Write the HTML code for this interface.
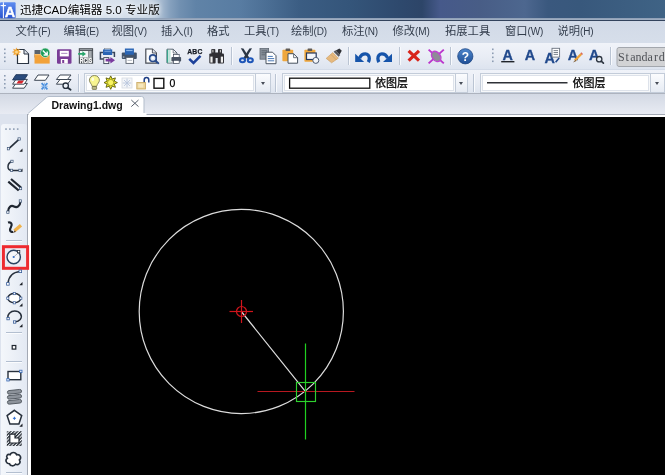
<!DOCTYPE html>
<html lang="zh">
<head>
<meta charset="utf-8">
<title>迅捷CAD编辑器 5.0 专业版</title>
<style>
*{box-sizing:border-box;margin:0;padding:0}
html,body{width:665px;height:475px;overflow:hidden;background:#d3dbe8}
body{position:relative;font-family:"Liberation Sans","Noto Sans CJK SC",sans-serif;color:#1e2a3c}
.abs{position:absolute}
svg.abs,.mi,.ddt,#titletxt,.tabt{filter:blur(.35px)}
#title{left:0;top:0;width:665px;height:18px;
 background:linear-gradient(90deg,#dfe7f0 0px,#d8e1ec 120px,#c6d3e2 150px,#a6bad0 161px,#86a1be 170px,#7190b1 180px,#6083a7 196px,#587ca2 240px,#4a6d93 270px,#3b5d83 300px,#34557a 350px,#2e496d 400px,#2d4568 422px,#46598a 440px,#485d86 480px,#4d678f 525px,#3a587e 548px,#38587c 580px,#3f6385 665px)}
#titletxt{left:20px;top:2px;font-size:11.6px;line-height:16px;color:#000;white-space:nowrap;letter-spacing:0px;text-shadow:0 0 4px #fff,0 0 6px #fff}
#tl1{left:0;top:18px;width:665px;height:2px;background:linear-gradient(#8b9cb4,#a3b1c4)}
#tl2{left:0;top:20px;width:665px;height:1px;background:#34445d}
#menu{left:0;top:21px;width:665px;height:22px;background:linear-gradient(#d2dae7,#d6deea)}
.mi{position:absolute;top:23.4px;font-size:11.3px;line-height:16px;color:#333d4c;white-space:nowrap}
.mi small{font-size:10px;letter-spacing:-0.15px;position:relative;top:0px}
#tb1{left:0;top:43px;width:665px;height:26px;background:linear-gradient(#f0f3f9 0,#e9edf5 50%,#dde4ef 100%)}
#tb2{left:0;top:70px;width:665px;height:24px;background:linear-gradient(#f0f3f9 0,#e9edf5 50%,#dde4ef 100%)}
#tabrow{left:0;top:93px;width:665px;height:21px;background:linear-gradient(#d3d9e4,#e8ebf3);border-top:1px solid #adb3be}
#leftbar{left:0;top:114px;width:31px;height:361px;background:#dde3ee}
#leftin{left:1px;top:124px;width:26px;height:352px;background:linear-gradient(90deg,#f4f7fb,#e3e9f3);border-radius:3px 3px 0 0}
#canvas{left:28px;top:115px;width:640px;height:364px;background:#000;border:solid #fff;border-width:2px 0 0 3px;outline:1px solid #a3a9b4;outline-offset:0}
.ic{position:absolute;width:16px;height:16px}
.sep{position:absolute;width:1px;height:18px;background:#9fb0c6;box-shadow:1px 0 0 #fff}
.grip{position:absolute;width:2px;height:16px;background:repeating-linear-gradient(#8c9bb0 0 2px,transparent 2px 4px)}
.dd{position:absolute;top:73px;height:20px;background:#fff;border:1px solid #c3ccd9;box-shadow:inset 0 0 0 1px #f6f8fa,inset 0 0 0 2px #dde2ea}
.ddb{position:absolute;top:73px;height:20px;background:linear-gradient(#fbfcfe,#e6ebf3);border:1px solid #c3ccd9}
.ddb:after{content:"";position:absolute;left:50%;top:7.500px;margin-left:-2.500px;border:2.500px solid transparent;border-top:3px solid #474d58}
.ddt{position:absolute;font-size:12px;line-height:16px;color:#000;white-space:nowrap;-webkit-text-stroke:.25px #000}
</style>
</head>
<body>
<div id="title" class="abs"></div>
<div id="tl1" class="abs"></div><div id="tl2" class="abs"></div>
<svg class="abs" style="left:0;top:1px" width="17" height="18" viewBox="0 0 17 18">
 <defs><linearGradient id="lg" x1="0" y1="0" x2="0" y2="1"><stop offset="0" stop-color="#5f8df0"/><stop offset="1" stop-color="#2a55cf"/></linearGradient></defs>
 <rect x="0" y="1.300" width="15.600" height="15.900" rx="1" fill="url(#lg)"/>
 <path d="M3.400 1.300v15.900M0.600 4.600h5.400" stroke="#fff" stroke-width="1" fill="none"/>
 <path d="M3.400 2.600l.7 1.400l1.400.6l-1.400.6l-.7 1.400l-.7-1.400l-1.400-.6l1.400-.6z" fill="#fff"/>
 <text x="9.900" y="16.200" font-family="'Liberation Sans',sans-serif" font-size="14.500" font-weight="bold" fill="#fff" text-anchor="middle" stroke="#fff" stroke-width=".3">A</text>
</svg>
<div id="titletxt" class="abs">迅捷CAD编辑器 5.0 专业版</div>

<div id="menu" class="abs"></div>
<div class="mi" style="left:15.500px">文件<small>(F)</small></div>
<div class="mi" style="left:63.500px">编辑<small>(E)</small></div>
<div class="mi" style="left:111.500px">视图<small>(V)</small></div>
<div class="mi" style="left:161px">插入<small>(I)</small></div>
<div class="mi" style="left:207px">格式</div>
<div class="mi" style="left:244px">工具<small>(T)</small></div>
<div class="mi" style="left:291px">绘制<small>(D)</small></div>
<div class="mi" style="left:342px">标注<small>(N)</small></div>
<div class="mi" style="left:392.500px">修改<small>(M)</small></div>
<div class="mi" style="left:445px">拓展工具</div>
<div class="mi" style="left:505px">窗口<small>(W)</small></div>
<div class="mi" style="left:557.500px">说明<small>(H)</small></div>

<div id="tb1" class="abs"></div>
<div id="tb2" class="abs"></div>
<div id="tabrow" class="abs"></div>
<div id="leftbar" class="abs"></div>
<div id="leftin" class="abs"></div>
<div id="canvas" class="abs"></div>


<!-- toolbar icons -->
<svg class="abs" style="left:0;top:0" width="665" height="120" viewBox="0 0 665 120" font-family="'Liberation Sans','Noto Sans CJK SC',sans-serif">
 <defs>
  <linearGradient id="hb" x1="0" y1="0" x2="0" y2="1"><stop offset="0" stop-color="#4d86cc"/><stop offset="1" stop-color="#1f4f96"/></linearGradient>
 </defs>
 <!-- grips -->
 <g fill="#8e9db3">
  <rect x="4" y="48.5" width="1.6" height="1.6"/><rect x="4" y="52.5" width="1.6" height="1.6"/><rect x="4" y="56.5" width="1.6" height="1.6"/><rect x="4" y="60.5" width="1.6" height="1.6"/>
  <rect x="4" y="75" width="1.6" height="1.6"/><rect x="4" y="79" width="1.6" height="1.6"/><rect x="4" y="83" width="1.6" height="1.6"/><rect x="4" y="87" width="1.6" height="1.6"/>
  <rect x="492" y="48.5" width="1.6" height="1.6"/><rect x="492" y="52.5" width="1.6" height="1.6"/><rect x="492" y="56.5" width="1.6" height="1.6"/><rect x="492" y="60.5" width="1.6" height="1.6"/>
 </g>
 <!-- separators -->
 <g stroke="#bac4d3" stroke-width="1">
  <path d="M231.5 47v18M348.5 47v18M399.5 47v18M450.5 47v18M610.5 47v18M78.5 74v18M275.5 74v18M473.5 74v18"/>
 </g>
 <g stroke="#f8fafd" stroke-width="1">
  <path d="M232.5 47v18M349.5 47v18M400.5 47v18M451.5 47v18M611.5 47v18M79.5 74v18M276.5 74v18M474.5 74v18"/>
 </g>

 <!-- 1 new -->
 <path d="M17.5 49.5h6.5l4.5 4.5v9.5h-11z" fill="#fff" stroke="#2b3543" stroke-width="1.2"/>
 <path d="M24 49.5v4.5h4.5" fill="#dfe5ee" stroke="#2b3543" stroke-width="1"/>
 <path d="M16.300 47.400L17.218 49.783L19.553 48.747L18.517 51.082L20.900 52.000L18.517 52.918L19.553 55.253L17.218 54.217L16.300 56.600L15.382 54.217L13.047 55.253L14.083 52.918L11.700 52.000L14.083 51.082L13.047 48.747L15.382 49.783z" fill="#f4a528" stroke="#e8952a" stroke-width=".4" transform="translate(1.800 5.200) scale(.9)"/><circle cx="16.500" cy="52" r="1.500" fill="#fbd58a"/>
 <!-- 2 open -->
 <path d="M34.5 50h6l1 1.5h3v6h-10z" fill="#5a626c"/>
 <path d="M34.5 54h15.2v9.6h-15.2z" fill="#f2a23a"/>
 <path d="M34.5 54h15.2v1.2h-15.2z" fill="#f7bd6a"/>
 <circle cx="45.2" cy="52.8" r="4.7" fill="#1e9d58" stroke="#e9f3ec" stroke-width=".6"/>
 <path d="M42.8 50.6l3.6 3.6M47.2 51.4v3.6h-3.6" fill="none" stroke="#fff" stroke-width="1.4"/>
 <!-- 3 save -->
 <rect x="57" y="49.2" width="14.5" height="14.5" rx="1.2" fill="#7a3d97"/>
 <rect x="59.8" y="50.8" width="9" height="5.6" fill="#fff"/>
 <rect x="61.2" y="52.8" width="6.2" height="1.2" fill="#b79ac8"/>
 <rect x="60.8" y="59" width="7" height="4.7" fill="#fff"/>
 <rect x="62.2" y="60" width="2" height="3" fill="#7a3d97"/>
 <!-- 4 rcis -->
 <rect x="78.800" y="48.200" width="14.300" height="15.500" fill="#474c52"/>
 <rect x="79.800" y="49" width="12.300" height="1.200" fill="#8f959b"/>
 <rect x="79.800" y="51" width="12.300" height="6.600" fill="#f4f5f7"/>
 <path d="M88.900 51v6.600M91.100 51v6.600" stroke="#6a7077" stroke-width="1.300"/>
 <path d="M78.200 53h4.200v-1.700l3.600 2.600l-3.600 2.600v-1.700h-4.200z" fill="#27a56a"/>
 <text transform="translate(86 63.100) scale(.78 1)" font-size="6.600" font-weight="bold" fill="#fff" stroke="#fff" stroke-width=".3" text-anchor="middle">RCIS</text>
 <!-- 5 print arrow -->
 <rect x="104.600" y="48.300" width="6" height="2" fill="#fff" stroke="#7d8591" stroke-width=".6"/>
 <rect x="103" y="49.400" width="9.200" height="5.600" fill="#2a64b4"/>
 <rect x="104.400" y="50.800" width="6.400" height="1.100" fill="#6d9ad6"/>
 <path d="M103 52.600h-2.600v6.300h3.500M112.200 52.600h2.200v4.400" fill="none" stroke="#37445a" stroke-width="1.500"/>
 <rect x="103.800" y="57.600" width="5" height="6" fill="#fff" stroke="#3a4556" stroke-width=".9"/>
 <path d="M105.600 58.800h4.800v-1.900l4.600 3.300l-4.600 3.300v-1.900h-4.800z" fill="#7a3a9e"/>
 <!-- 6 print -->
 <rect x="121.800" y="52.400" width="15" height="6.600" rx="1" fill="#41526a"/>
 <rect x="124.900" y="48.500" width="9" height="6.200" fill="#2a64b4"/>
 <rect x="126.200" y="49.900" width="6.400" height="1.200" fill="#8db6e6"/>
 <rect x="126" y="57.400" width="7.600" height="6" fill="#fff" stroke="#59616d" stroke-width=".9"/>
 <path d="M127.500 60.400h4.600" stroke="#a3abb6" stroke-width=".8"/>
 <rect x="122.800" y="56.600" width="1.600" height=".9" fill="#dfe5ee"/>
 <!-- 7 preview -->
 <path d="M145.800 49h6.600l4 4v10.200h-10.600z" fill="#fbfcfd" stroke="#474c55" stroke-width="1.200"/>
 <path d="M152.400 49v4h4" fill="#e3e7ee" stroke="#474c55" stroke-width=".9"/>
 <circle cx="152.900" cy="58.200" r="3.300" fill="#dfe9f6" stroke="#27498a" stroke-width="1.600"/>
 <circle cx="152.900" cy="58.200" r="1.100" fill="#fff"/>
 <path d="M155.500 60.800l2.800 2.400" stroke="#27498a" stroke-width="2" stroke-linecap="round"/>
 <!-- 8 page+printer -->
 <path d="M167 49.200h6.200l3.800 3.800v10h-10z" fill="#fff" stroke="#596471" stroke-width="1"/>
 <path d="M167.500 49.700v13" stroke="#39a58c" stroke-width="1.400"/><rect x="168.200" y="49.800" width="2.400" height="12.800" fill="#bfe3da"/>
 <path d="M173.200 49.200v3.800h3.800" fill="none" stroke="#596471" stroke-width=".8"/>
 <rect x="173.400" y="54.500" width="5.800" height="3" fill="#fff" stroke="#3a4454" stroke-width=".7"/>
 <rect x="171.400" y="57" width="9.700" height="4.600" rx=".8" fill="#485362"/>
 <rect x="173.400" y="60.300" width="5.800" height="3.300" fill="#fff" stroke="#3a4454" stroke-width=".7"/>
 <!-- 9 abc -->
 <text x="194.900" y="53.700" font-size="6.800" font-weight="bold" fill="#161b24" stroke="#161b24" stroke-width=".25" text-anchor="middle" letter-spacing=".2">ABC</text>
 <path d="M189.200 58.800l4.300 4.100l7-7" fill="none" stroke="#1c419a" stroke-width="2.500"/>
 <!-- 10 binoculars -->
 <g fill="#303035">
  <rect x="211.300" y="49" width="4" height="5.500" rx=".8"/><rect x="218" y="49" width="4" height="5.500" rx=".8"/>
  <rect x="209.300" y="53.600" width="6.300" height="10" rx="1"/><rect x="217.700" y="53.600" width="6.300" height="10" rx="1"/>
  <rect x="215" y="52.500" width="3.300" height="5.500"/>
 </g>
 <rect x="210.400" y="56.600" width="2.200" height="6" fill="#f0f0f0"/><rect x="220.800" y="56.600" width="2.200" height="6" fill="#f0f0f0"/><rect x="212.300" y="49.800" width="1.200" height="2.600" fill="#bdbdbd"/><rect x="219.800" y="49.800" width="1.200" height="2.600" fill="#bdbdbd"/>
 <!-- 11 scissors -->
 <path d="M240.800 48.300l2.600 0.200l6 9.300l-2.300 1.300z" fill="#2b3645"/>
 <path d="M252 48.300l-2.600 0.200l-6 9.300l2.300 1.300z" fill="#2b3645"/>
 <ellipse cx="242.500" cy="60.200" rx="2.500" ry="2" fill="#dfe6f2" stroke="#1d55b8" stroke-width="2.100"/>
 <ellipse cx="250.300" cy="60.200" rx="2.500" ry="2" fill="#dfe6f2" stroke="#1d55b8" stroke-width="2.100"/>
 <!-- 12 copy -->
 <rect x="260" y="48.600" width="8.600" height="10.600" fill="#8a929c" stroke="#5f6872" stroke-width=".8"/>
 <path d="M261.500 50.800h5.500M261.500 52.800h5.500M261.500 54.800h3.500" stroke="#5b636d" stroke-width=".9"/>
 <path d="M266 52.200h6.500l3.500 3.500v8h-10z" fill="#fff" stroke="#48525f" stroke-width="1"/>
 <path d="M267.800 56.400h5M267.800 58.600h6.400M267.800 60.800h6.400" stroke="#4a78b5" stroke-width="1"/>
 <!-- 13 paste -->
 <rect x="282.400" y="49.800" width="10.800" height="11.500" rx=".8" fill="#efa73d"/>
 <rect x="285.600" y="48.400" width="4.600" height="2.600" rx=".6" fill="#5f5a55"/>
 <path d="M288 53.700h5.600l4 4v5.500h-9.600z" fill="#fff" stroke="#46505d" stroke-width="1"/>
 <path d="M293.600 53.700v4h4" fill="none" stroke="#46505d" stroke-width=".8"/>
 <!-- 14 paste special -->
 <rect x="304.400" y="49.800" width="11" height="12" rx=".8" fill="#efa73d"/>
 <rect x="307.600" y="48.400" width="4.600" height="2.600" rx=".6" fill="#5f5a55"/>
 <rect x="306.500" y="53" width="9.700" height="6.500" fill="#f4f6fa" stroke="#25385c" stroke-width="1.200"/>
 <circle cx="315.800" cy="60.400" r="3" fill="#f4f6fa" stroke="#4a5870" stroke-width="1"/>
 <!-- 15 brush -->
 <path d="M332.800 52.600l5.600 5.600l-6.800 4.600l-5.400-4.400z" fill="#e6b97e" stroke="#c99b5c" stroke-width=".6"/>
 <path d="M331 54.500l5.500 5.500" stroke="#c9a06a" stroke-width=".8"/>
 <path d="M333.600 51.800l1.800-1.600l4.800 4.800l-1.600 1.800z" fill="#56585d"/>
 <path d="M335.800 50.600l3.600-2.200l2.400 2.400l-2.200 3.600z" fill="#2f3136"/>
 <!-- 16 undo -->
 <path d="M355.200 53.800v8.300h9z" fill="#1654aa"/>
 <path d="M359.600 58.200c2.200-5.600 9.900-5.900 9.700 0.300c0 1.400-0.400 2.500-1 3.600" fill="none" stroke="#1654aa" stroke-width="3.300"/>
 <!-- 17 redo -->
 <path d="M392 53.800v8.300h-9z" fill="#1654aa"/>
 <path d="M387.600 58.200c-2.200-5.600-9.900-5.900-9.700 0.300c0 1.400 0.400 2.500 1 3.600" fill="none" stroke="#1654aa" stroke-width="3.300"/>
 <!-- 18 red x -->
 <path d="M408.600 50.800l10.400 9.800M419 50.800l-10.400 9.800" stroke="#d8241b" stroke-width="3.200"/>
 <!-- 19 purple x -->
 <path d="M428.600 49.600l15.200 13.800M443.800 49.600l-15.200 13.800" stroke="#bb33cc" stroke-width="1.900"/>
 <ellipse cx="436.200" cy="56.400" rx="5.600" ry="4" transform="rotate(52 436.200 56.400)" fill="#8f8b97" stroke="#c044d2" stroke-width="1.500"/>
 <!-- 20 help -->
 <circle cx="465.300" cy="56.300" r="7.600" fill="url(#hb)" stroke="#1c4583" stroke-width=".8"/>
 <text x="465.300" y="60.600" font-size="12" font-weight="bold" fill="#fff" text-anchor="middle">?</text>
 <!-- 21-25 text A icons -->
 <g font-weight="bold" fill="#21498c" stroke="#21498c" stroke-width=".3" font-size="14.400" text-anchor="middle">
  <text x="507.800" y="59.700">A</text>
  <text x="530" y="59.900">A</text>
  <text x="549.800" y="63.200">A</text>
  <text x="573" y="60.200">A</text>
  <text x="594.200" y="60.200">A</text>
 </g>
 <path d="M501.200 61.700h13.200" stroke="#20242a" stroke-width="1.400"/>
 <!-- 23 doc -->
 <rect x="552" y="48.300" width="7.600" height="8.800" fill="#fdfdfe" stroke="#6a727d" stroke-width=".9"/>
 <path d="M553.600 50.600h4.400M553.600 52.500h4.400M553.600 54.400h4.400" stroke="#59636f" stroke-width=".8"/>
 <path d="M555.600 62.200l3.600-4.200" stroke="#21498c" stroke-width="1.600"/>
 <!-- 24 pencil -->
 <path d="M581.300 54l-6.400 6.400" stroke="#f0a236" stroke-width="2.300"/>
 <path d="M575.400 59.700l-2.400 2.800l3.300-1.600z" fill="#7a5a34"/>
 <path d="M582.200 53.100l-1 1" stroke="#d86a5a" stroke-width="2.300"/>
 <!-- 25 magnifier -->
 <circle cx="599.200" cy="59.200" r="2.700" fill="#e8eef6" stroke="#2c3440" stroke-width="1.300"/>
 <path d="M601.200 61.200l2.200 2" stroke="#2c3440" stroke-width="1.700" stroke-linecap="round"/>
 <!-- standard box -->
 <rect x="617" y="47.500" width="52" height="19" rx="2" fill="#d2d3d5" stroke="#a3a7ad" stroke-width="1"/>
 <text x="621.3 627.1 632.9 638.6 644.4 650.2 656.0 661.8" y="61" font-family="'Liberation Serif',serif" font-size="12" fill="#505358" text-anchor="middle">Standard</text>
</svg>


<!-- row2 dropdowns -->
<div class="dd" style="left:84px;width:172px"></div><div class="ddb" style="left:255px;width:16px"></div>
<div class="dd" style="left:282px;width:174px"></div><div class="ddb" style="left:455px;width:13px"></div>
<div class="dd" style="left:480px;width:171px"></div><div class="ddb" style="left:650px;width:15px"></div>
<div class="ddt" style="left:169.5px;top:75px;font-size:10.5px">0</div>
<div class="ddt" style="left:375px;top:74.5px;font-size:11px">依图层</div>
<div class="ddt" style="left:572.5px;top:74.5px;font-size:11px">依图层</div>
<svg class="abs" style="left:0;top:70px" width="665" height="26" viewBox="0 70 665 26">
 <!-- layers a -->
 <path d="M12.600 88.200l3.200-4.800h11.600l-3.200 4.800z" fill="#fff" stroke="#3d4754" stroke-width="1"/>
 <path d="M12.600 84.200l3.200-4.800h11.600l-3.200 4.800z" fill="#fff" stroke="#3d4754" stroke-width="1"/>
 <path d="M16.500 83.600l2-3h5.500l-2 3z" fill="#d8262c"/>
 <path d="M12.600 79.900l3.300-5.200h11.600l-3.300 5.200z" fill="#2b4b7c" stroke="#243b5e" stroke-width="1"/>
 <!-- b -->
 <path d="M34.400 80.300l3.600-5.300h11l-3.600 5.300z" fill="#fff" stroke="#3d4754" stroke-width="1"/>
 <path d="M41.600 83.200l5.800 6.200M47.400 83.200l-5.800 6.200" stroke="#4a8fde" stroke-width="1.700"/><path d="M44.500 82.800v7M41.300 86.300h6.400" stroke="#8db8ea" stroke-width="1"/>
 <!-- c -->
 <path d="M56.400 84.200l3.600-4.700h11l-3.600 4.700z" fill="#fff" stroke="#3d4754" stroke-width="1"/>
 <path d="M56.400 79.500l3.600-4.500h11l-3.600 4.500z" fill="#fff" stroke="#3d4754" stroke-width="1"/>
 <circle cx="65.700" cy="85.700" r="2.700" fill="#eef2f7" stroke="#27313d" stroke-width="1.300"/>
 <path d="M67.800 87.800l2.800 2" stroke="#27313d" stroke-width="1.800" stroke-linecap="round"/>
 <!-- bulb -->
 <path d="M94.400 75.500c-3 0-5 2.200-5 4.700c0 2.400 2.200 3.600 2.800 6.200h4.400c0.600-2.600 2.800-3.800 2.800-6.200c0-2.500-2-4.700-5-4.700z" fill="#f7f590" stroke="#7d7d55" stroke-width=".9"/><ellipse cx="92.800" cy="79.200" rx="1.300" ry="2" fill="#fdfde0"/>
 <rect x="92.200" y="86.400" width="4.400" height="3" rx=".6" fill="#b9b98a" stroke="#66663c" stroke-width=".7"/>
 <!-- sun -->
 <path d="M110.700 75.900L112.200 79.000L115.400 77.900L114.300 81.100L117.400 82.600L114.300 84.100L115.400 87.300L112.200 86.200L110.700 89.300L109.200 86.200L106.000 87.300L107.100 84.100L104.000 82.600L107.100 81.100L106.000 77.900L109.200 79.000z" fill="#f6f02a" stroke="#5c5c0c" stroke-width=".9"/>
 <circle cx="110.700" cy="82.600" r="3.200" fill="#faf560" stroke="#6a6a10" stroke-width=".6"/>
 <!-- frozen -->
 <rect x="122" y="78" width="10" height="10" fill="#f3f5f8" stroke="#d5dae2" stroke-width=".8"/>
 <path d="M127 78.600v8.800M122.800 83h8.400M124 80l6 6M130 80l-6 6" stroke="#b9c6dc" stroke-width=".9"/>
 <!-- lock -->
 <path d="M144.200 83.600v-3.600c0-3.400 4.600-3.400 4.600 0v2.600" fill="none" stroke="#1f3f86" stroke-width="1.500"/>
 <rect x="136.800" y="82.400" width="8.600" height="6.600" fill="#ecd59c" stroke="#c9a760" stroke-width=".8"/>
 <rect x="138.300" y="83.800" width="5" height="3.800" fill="#f6e7bd"/>
 <!-- square -->
 <rect x="154" y="78.400" width="9.800" height="9.800" fill="#fff" stroke="#111" stroke-width="1.400"/>
 <!-- color swatch -->
 <rect x="289.600" y="78.200" width="80.200" height="10" fill="#fff" stroke="#111" stroke-width="1.300"/>
 <!-- linetype sample -->
 <path d="M487 82.700h80.500" stroke="#2e3136" stroke-width="1.500"/>
</svg>

<!-- tab -->
<svg class="abs" style="left:0;top:94px" width="200" height="22" viewBox="0 94 200 22">
 <path d="M28 113.500L46.500 97.500q1-1 2.500-1H141.500q2.500 0 2.500 2.500V113.500z" fill="#fff" stroke="#b3bdcb" stroke-width="1"/>
 <rect x="28.500" y="113" width="118" height="3" fill="#fff"/>
 <path d="M131.300 100l7.200 6.600M138.500 100l-7.200 6.600" stroke="#59616d" stroke-width="1"/>
</svg>
<div class="abs tabt" style="left:51.500px;top:96.600px;font-size:10.500px;font-weight:bold;line-height:16px;color:#111;white-space:nowrap">Drawing1.dwg</div>


<!-- left toolbar -->
<svg class="abs" style="left:0;top:116px" width="31" height="359" viewBox="0 116 31 359">
 <g fill="#8e9db3"><rect x="5.200" y="128.300" width="1.600" height="1.600"/><rect x="9.100" y="128.300" width="1.600" height="1.600"/><rect x="13" y="128.300" width="1.600" height="1.600"/><rect x="16.900" y="128.300" width="1.600" height="1.600"/></g>
 <!-- separators -->
 <g stroke="#b3bfd0" stroke-width="1"><path d="M6 240.500h16M6 332.500h16M6 361.500h16M6 472.500h16"/></g>
 <g stroke="#fbfcfe" stroke-width="1"><path d="M6 241.500h16M6 333.500h16M6 362.500h16M6 473.500h16"/></g>
 <!-- dropdown triangles -->
 <g fill="#1b1f26">
  <path d="M22.500 148.500v3.200h-3.200z"/><path d="M22.500 168.500v3.200h-3.200z"/><path d="M22.700 260.300v3.400h-3.400z"/>
  <path d="M22.500 282v3.200h-3.200z"/><path d="M22.500 303.200v3.200h-3.200z"/><path d="M22.500 324v3.200h-3.200z"/><path d="M22.500 423.500v3.200h-3.200z"/>
 </g>
 <!-- 1 line -->
 <path d="M8.600 148.800L19.200 139.200" stroke="#27303c" stroke-width="1.700"/>
 <rect x="7.300" y="147.600" width="2.300" height="2.300" fill="#f4f7fb" stroke="#3d5578" stroke-width=".7"/>
 <rect x="18" y="137.800" width="2.300" height="2.300" fill="#f4f7fb" stroke="#3d5578" stroke-width=".7"/>
 <!-- 2 polyline arc -->
 <path d="M12 161.500c-5 1.500-5.500 8.500-0.500 9h8.500" fill="none" stroke="#27303c" stroke-width="1.500"/>
 <rect x="10.800" y="160.200" width="2.300" height="2.300" fill="#f4f7fb" stroke="#3d5578" stroke-width=".7"/>
 <rect x="10.400" y="169.200" width="2.300" height="2.300" fill="#f4f7fb" stroke="#3d5578" stroke-width=".7"/>
 <rect x="18.800" y="169.200" width="2.300" height="2.300" fill="#f4f7fb" stroke="#3d5578" stroke-width=".7"/>
 <!-- 3 double line -->
 <path d="M8.300 181.700L18.700 190.500M11 179L21 187.500" stroke="#1f2630" stroke-width="2.200"/>
 <rect x="19.400" y="187.400" width="2.300" height="2.300" fill="#f4f7fb" stroke="#3d5578" stroke-width=".7"/>
 <!-- 4 spline -->
 <path d="M8 212c0-5 3-7 6-5.500s6 0 6.500-5" fill="none" stroke="#1f2630" stroke-width="2.200"/>
 <rect x="6.700" y="211" width="2.300" height="2.300" fill="#f4f7fb" stroke="#3d5578" stroke-width=".7"/>
 <rect x="19.200" y="199.800" width="2.300" height="2.300" fill="#f4f7fb" stroke="#3d5578" stroke-width=".7"/>
 <!-- 5 freehand -->
 <path d="M8 222.500c3.500-1 4.500 2 3 4.500s-1.500 5 2 5" fill="none" stroke="#1f2630" stroke-width="2.200"/>
 <path d="M21 225.300l-6.500 5.500" stroke="#f0b24a" stroke-width="3.400"/>
 <path d="M15 230.300l-2.600 2.600l3.400-0.800z" fill="#5a4632"/>
 <!-- 6 circle with red box -->
 <rect x="3.400" y="246.700" width="24.200" height="21.600" fill="#ebeaf3" stroke="#ee2a30" stroke-width="3"/>
 <circle cx="13.700" cy="257" r="6.700" fill="#f6f8fb" stroke="#2a4260" stroke-width="1.400"/>
 <circle cx="13.700" cy="257" r="1.100" fill="#2f6fd0"/>
 <path d="M13.700 257L18.600 252.600" stroke="#8a94a2" stroke-width=".7"/>
 <rect x="17.400" y="250.400" width="2.400" height="2.400" fill="#fff" stroke="#27303c" stroke-width=".8"/>
 <!-- 7 arc -->
 <path d="M8 283.500c0.500-7 5-11.500 12-12" fill="none" stroke="#27303c" stroke-width="1.500"/>
 <rect x="6.600" y="282.600" width="2.600" height="2.600" fill="#fff" stroke="#3a5e9a" stroke-width=".8"/>
 <rect x="19" y="270" width="2.600" height="2.600" fill="#fff" stroke="#3a5e9a" stroke-width=".8"/>
 <!-- 8 ellipse -->
 <ellipse cx="14.300" cy="298.200" rx="6.500" ry="4.600" fill="#fff" stroke="#27303c" stroke-width="1.500"/>
 <g fill="#fff" stroke="#3a5e9a" stroke-width=".7"><rect x="13.200" y="292.500" width="2.200" height="2.200"/><rect x="13.200" y="301.700" width="2.200" height="2.200"/><rect x="6.700" y="297.100" width="2.200" height="2.200"/><rect x="19.700" y="297.100" width="2.200" height="2.200"/></g>
 <!-- 9 elliptical arc -->
 <path d="M8.200 318.500c-1.500-4 2.500-7.500 6.500-7.500c5 0 8.500 4.500 5.500 8.500c-1.200 1.500-3.500 2.300-5.500 2.600" fill="none" stroke="#27303c" stroke-width="1.500"/>
 <rect x="6.900" y="317.400" width="2.400" height="2.400" fill="#fff" stroke="#3a5e9a" stroke-width=".8"/>
 <rect x="13.400" y="320.800" width="2.400" height="2.400" fill="#fff" stroke="#3a5e9a" stroke-width=".8"/>
 <!-- 10 point -->
 <rect x="12.200" y="345.500" width="3.600" height="3.600" fill="#fff" stroke="#1f2630" stroke-width="1.200"/>
 <!-- 11 rectangle -->
 <rect x="8" y="371.500" width="12.800" height="8.200" fill="#fff" stroke="#27303c" stroke-width="1.400"/>
 <rect x="19.600" y="370.200" width="2.400" height="2.400" fill="#dfe9f7" stroke="#3a6ab5" stroke-width=".8"/>
 <rect x="6.800" y="378.600" width="2.400" height="2.400" fill="#dfe9f7" stroke="#3a6ab5" stroke-width=".8"/>
 <!-- 12 coil -->
 <g fill="#8d939b" stroke="#50565e" stroke-width=".9"><rect x="7.400" y="390" width="14.200" height="3.600" rx="1.800" transform="rotate(-6 14.500 392)"/><rect x="7.400" y="395" width="14.200" height="3.600" rx="1.800" transform="rotate(-6 14.500 397)"/><rect x="7.400" y="400" width="14.200" height="3.600" rx="1.800" transform="rotate(-6 14.500 402)"/></g>
 <!-- 13 polygon -->
 <path d="M14.400 410.300l7.300 5.300l-2.800 8.500h-9l-2.800-8.500z" fill="#fff" stroke="#27303c" stroke-width="1.500"/>
 <path d="M14.400 416.800v3M12.900 418.300h3" stroke="#2f6fd0" stroke-width="1"/>
 <!-- 14 hatch -->
 <defs><pattern id="ht" width="2.400" height="2.400" patternUnits="userSpaceOnUse" patternTransform="rotate(45)"><rect width="1.300" height="2.400" fill="#20262e"/></pattern></defs>
 <rect x="6.800" y="431.200" width="15" height="14.800" fill="#f3f6fa"/>
 <rect x="6.800" y="431.200" width="15" height="14.800" fill="url(#ht)"/>
 <path d="M9.800 434.200h5.200v3.800h4v5h-9.200z" fill="#fff" stroke="#20262e" stroke-width="1.200"/>
 <!-- 15 cloud -->
 <path transform="translate(-1.200 -39.500) scale(1.080 1.085)" d="M10.500 455.500c1-2.800 5-2.800 6 0c3-0.800 5 2.800 2.600 4.800c1.800 2.600-1.200 5.400-3.600 3.900c-1.400 2.200-5 2-5.600-0.400c-3 0.400-4.400-3.400-2-5c-1.600-2 0.200-4.400 2.600-3.300z" fill="#fff" stroke="#27303c" stroke-width="1.500"/>
</svg>

<!-- drawing -->
<svg class="abs" style="left:31px;top:116px" width="634" height="359" viewBox="31 116 634 359">
 <circle cx="241.3" cy="311.5" r="102.1" fill="none" stroke="#dcdcdc" stroke-width="1.2"/>
 <line x1="241.3" y1="311.5" x2="305.3" y2="391.3" stroke="#e0e0e0" stroke-width="1.2"/>
 <g stroke="#d0141c" stroke-width="1.2" fill="none">
  <line x1="229.500" y1="311.500" x2="253" y2="311.500"/><line x1="241.500" y1="300" x2="241.500" y2="323"/>
  <circle cx="241.5" cy="311.5" r="5"/>
 </g>
 <line x1="257.5" y1="391.5" x2="354.5" y2="391.5" stroke="#b81820" stroke-width="1.2"/>
 <line x1="305.5" y1="343.5" x2="305.5" y2="439.5" stroke="#20d020" stroke-width="1.2"/>
 <rect x="296.5" y="382.5" width="19" height="19" fill="none" stroke="#2fd02f" stroke-width="1.15"/>
</svg>
</body>
</html>
